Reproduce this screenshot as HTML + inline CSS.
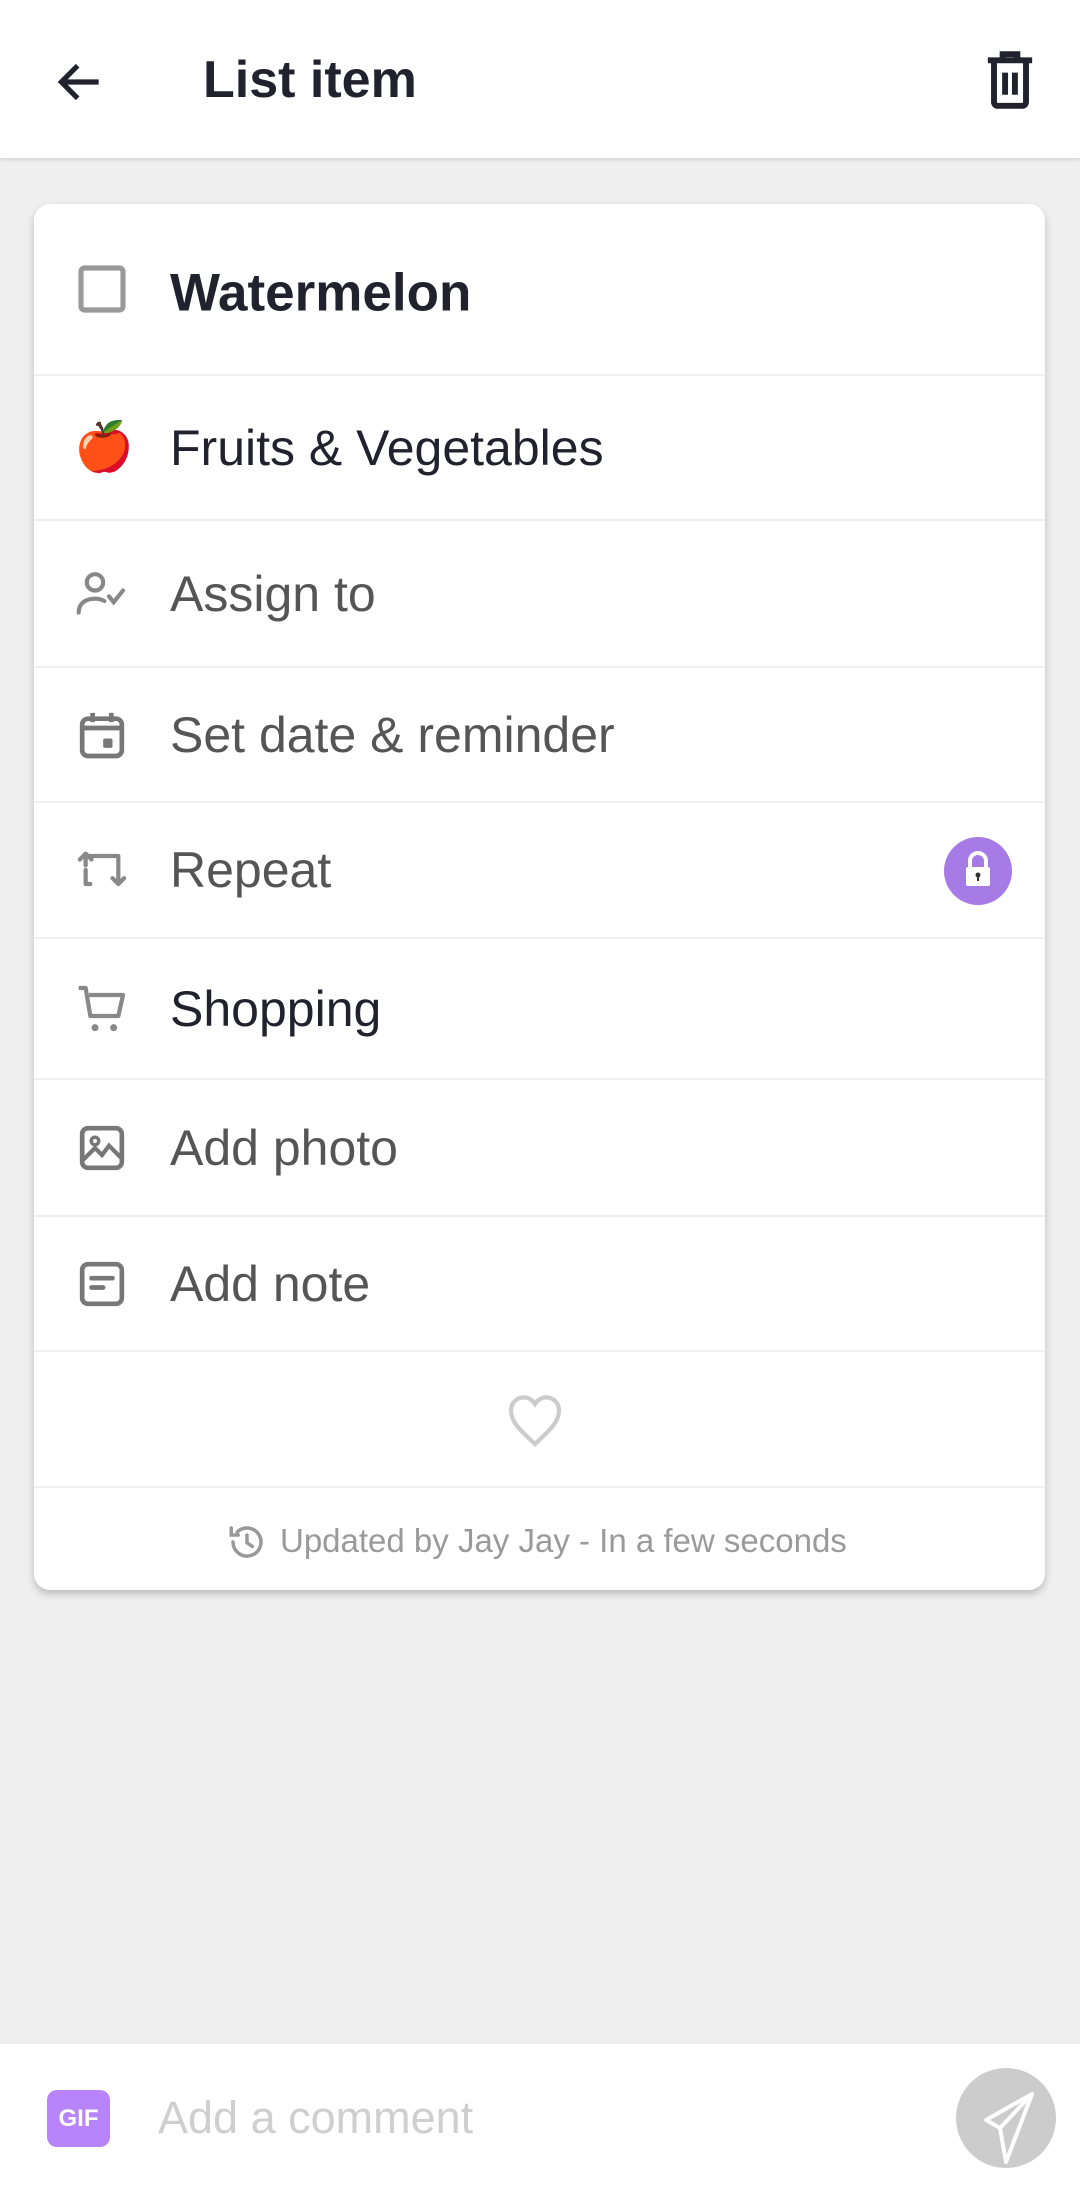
<!DOCTYPE html>
<html><head><meta charset="utf-8">
<style>
*{margin:0;padding:0;box-sizing:border-box}
body{width:1080px;height:2190px;background:#efefef;font-family:"Liberation Sans",Roboto,sans-serif;position:relative;overflow:hidden}
.hdr{position:absolute;left:0;top:0;width:1080px;height:158px;background:#fff;box-shadow:0 2px 4px rgba(0,0,0,.12)}
.title{position:absolute;left:203px;top:50px;font-size:52px;font-weight:bold;color:#22222e;line-height:60px}
.card{position:absolute;left:34px;top:204px;width:1011px;height:1386px;background:#fff;border-radius:16px;box-shadow:0 4px 8px rgba(0,0,0,.22)}
.row{position:absolute;left:0;width:1011px;border-bottom:2px solid #f0f0f0}
.row .ic{position:absolute;left:40px;top:50%;transform:translateY(-50%);width:56px;height:56px}
.row .tx{position:absolute;left:136px;top:50%;transform:translateY(-50%);font-size:50px;color:#555;white-space:nowrap}
.dark{color:#22222e !important}
.bar{position:absolute;left:0;top:2044px;width:1080px;height:146px;background:#fff}
</style></head><body>
<div class="hdr">
<svg style="position:absolute;left:52px;top:54px" width="56" height="56" viewBox="0 0 24 24"><path d="M20 12H5M11 5l-7 7 7 7" fill="none" stroke="#22222e" stroke-width="2.2"/></svg>
<div class="title">List item</div>
<svg style="position:absolute;left:980px;top:48px" width="60" height="64" viewBox="0 0 24 26"><path d="M3 5h18M9 5V2.5h6V5M5.5 5v17a1.5 1.5 0 0 0 1.5 1.5h10a1.5 1.5 0 0 0 1.5-1.5V5M10 10v9M14 10v9" fill="none" stroke="#22222e" stroke-width="2.4"/></svg>
</div>
<div class="card">
 <div class="row" style="top:0;height:172px">
  <svg class="ic" viewBox="0 0 24 24"><rect x="3" y="3" width="18" height="18" rx="1.5" fill="none" stroke="#999" stroke-width="2.2"/></svg>
  <div class="tx dark" style="font-weight:bold;font-size:53px;margin-top:4px">Watermelon</div>
 </div>
 <div class="row" style="top:172px;height:145px">
  <div class="ic" style="font-size:48px;line-height:56px;text-align:center">🍎</div>
  <div class="tx dark">Fruits &amp; Vegetables</div>
 </div>
 <div class="row" style="top:317px;height:147px">
  <svg class="ic" viewBox="0 0 24 24"><circle cx="9" cy="7" r="3.5" fill="none" stroke="#888" stroke-width="1.8"/><path d="M2 20c0-4 3-6 7-6 2 0 3 .4 4 1M15 13l2 2.5 4-5" fill="none" stroke="#888" stroke-width="1.8" stroke-linecap="round"/></svg>
  <div class="tx">Assign to</div>
 </div>
 <div class="row" style="top:464px;height:135px">
  <svg class="ic" viewBox="0 0 24 24"><rect x="3.5" y="5" width="17" height="16" rx="2.5" fill="none" stroke="#777" stroke-width="2"/><path d="M3.5 9h17M8 2.5v4M16 2.5v4" stroke="#777" stroke-width="2"/><rect x="12.5" y="13.5" width="4" height="4" rx=".8" fill="#777"/></svg>
  <div class="tx">Set date &amp; reminder</div>
 </div>
 <div class="row" style="top:599px;height:136px">
  <svg class="ic" viewBox="0 0 24 24"><path d="M5 10V6h14v12M7 18h-2V12M2.5 7.5L5 5l2.5 2.5M16.5 15.5L19 18l2.5-2.5" fill="none" stroke="#888" stroke-width="1.8" stroke-linecap="round" stroke-linejoin="round"/></svg>
  <div class="tx">Repeat</div>
  <svg style="position:absolute;left:910px;top:34px" width="68" height="68" viewBox="0 0 68 68"><circle cx="34" cy="34" r="34" fill="#a77be6"/><path d="M26 30v-6a8 8 0 0 1 16 0v6" fill="none" stroke="#fff" stroke-width="4"/><rect x="22" y="30" width="24" height="19" rx="2" fill="#fff"/><circle cx="34" cy="38" r="2.5" fill="#333"/><rect x="33" y="38" width="2" height="6" fill="#333"/></svg>
 </div>
 <div class="row" style="top:735px;height:141px">
  <svg class="ic" viewBox="0 0 24 24"><path d="M2 3h3l2 12h12l2-9H6.5" fill="none" stroke="#888" stroke-width="1.8" stroke-linejoin="round"/><circle cx="9" cy="20" r="1.5" fill="#888"/><circle cx="17" cy="20" r="1.5" fill="#888"/></svg>
  <div class="tx dark">Shopping</div>
 </div>
 <div class="row" style="top:876px;height:137px">
  <svg class="ic" viewBox="0 0 24 24"><rect x="3.5" y="3.5" width="17" height="17" rx="2.5" fill="none" stroke="#777" stroke-width="2"/><circle cx="9" cy="9" r="1.6" fill="none" stroke="#777" stroke-width="1.5"/><path d="M4 17l5-5 3 3 3-4 5 5" fill="none" stroke="#777" stroke-width="1.8"/></svg>
  <div class="tx">Add photo</div>
 </div>
 <div class="row" style="top:1013px;height:135px">
  <svg class="ic" viewBox="0 0 24 24"><rect x="3.5" y="3.5" width="17" height="17" rx="2.5" fill="none" stroke="#777" stroke-width="2"/><path d="M7.5 9.5h9M7.5 13.5h5" stroke="#777" stroke-width="2" stroke-linecap="round"/></svg>
  <div class="tx">Add note</div>
 </div>
 <div class="row" style="top:1148px;height:136px">
  <svg style="position:absolute;left:468px;top:36px" width="66" height="64" viewBox="0 0 24 24"><path d="M12 21C6 15.5 3 12.5 3 8.5 3 5.5 5.2 3.5 7.8 3.5c1.8 0 3.2 1 4.2 2.5 1-1.5 2.4-2.5 4.2-2.5 2.6 0 4.8 2 4.8 5 0 4-3 7-9 12.5z" fill="none" stroke="#ccc" stroke-width="1.6"/></svg>
 </div>
 <svg style="position:absolute;left:192px;top:1317px" width="42" height="42" viewBox="0 0 24 24"><path d="M4 12a8 8 0 1 0 2.4-5.7M3 4v4h4M12 8v4.5l3 2" fill="none" stroke="#999" stroke-width="2" stroke-linecap="round"/></svg>
 <div style="position:absolute;left:246px;top:1317px;font-size:33px;color:#9a9a9a;white-space:nowrap;line-height:40px">Updated by Jay Jay - In a few seconds</div>
</div>
<div class="bar">
 <div style="position:absolute;left:47px;top:46px;width:63px;height:57px;border-radius:10px;background:#b784fb;color:#fff;font-weight:bold;font-size:24px;line-height:57px;text-align:center">GIF</div>
 <div style="position:absolute;left:158px;top:46px;font-size:45px;color:#cfcfcf;line-height:56px">Add a comment</div>
 <svg style="position:absolute;left:956px;top:24px" width="100" height="100" viewBox="0 0 100 100"><circle cx="50" cy="50" r="50" fill="#cccccc"/><path d="M76 26L30 52l14 8 6 34z M76 26L44 60" fill="none" stroke="#fff" stroke-width="4" stroke-linejoin="round"/></svg>
</div>
</body></html>
